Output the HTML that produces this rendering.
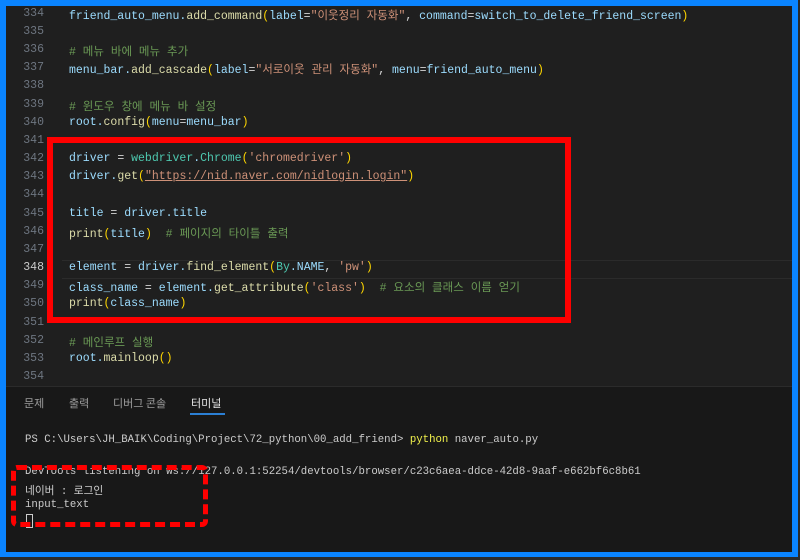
<!DOCTYPE html>
<html><head><meta charset="utf-8"><style>
body{margin:0;width:800px;height:560px;background:#2a2a2a;overflow:hidden;font-family:"Liberation Mono","Noto Sans CJK KR",monospace;}
.frame{position:absolute;left:0;top:0;width:786px;height:545px;border:6px solid #0a84ff;background:#1e1e1e;}
.ed{position:absolute;left:0;top:2px;width:786px;height:378px;}
.edbg{position:absolute;left:0;top:0;width:786px;height:380px;background:#1f1f1f;}
.ln{position:absolute;left:0;width:38px;text-align:right;color:#6e7681;font-size:11.5px;}
.ln.cur{color:#cccccc}
.code{position:absolute;left:63px;font-size:11.5px;color:#9cdcfe;white-space:pre;}
.f{color:#dcdcaa}.s{color:#ce9178}.c{color:#6a9955}.p{color:#ffd700}.k{color:#4ec9b0}.w{color:#d4d4d4}
.panel{position:absolute;left:0;top:380px;width:786px;height:165px;background:#181818;border-top:1px solid #2b2b2b;}
.tab{position:absolute;top:8px;font-size:11px;color:#9d9d9d;font-family:"Noto Sans CJK KR",sans-serif;}
.t{position:absolute;left:19px;font-size:10.7px;color:#cccccc;white-space:pre;}
</style></head><body>
<div class="frame">
<div class="edbg"></div>
<div class="ed">
<div class="ln" style="top:-1px">334</div><div class="code" style="top:-1px">friend_auto_menu.<span class="f">add_command</span><span class="p">(</span>label<span class="w">=</span><span class="s">"이웃정리 자동화"</span><span class="w">, </span>command<span class="w">=</span>switch_to_delete_friend_screen<span class="p">)</span></div>
<div class="ln" style="top:17px">335</div>
<div class="ln" style="top:35px">336</div><div class="code c" style="top:35px"># 메뉴 바에 메뉴 추가</div>
<div class="ln" style="top:53px">337</div><div class="code" style="top:53px">menu_bar.<span class="f">add_cascade</span><span class="p">(</span>label<span class="w">=</span><span class="s">"서로이웃 관리 자동화"</span><span class="w">, </span>menu<span class="w">=</span>friend_auto_menu<span class="p">)</span></div>
<div class="ln" style="top:71px">338</div>
<div class="ln" style="top:90px">339</div><div class="code c" style="top:90px"># 윈도우 창에 메뉴 바 설정</div>
<div class="ln" style="top:108px">340</div><div class="code" style="top:108px">root.<span class="f">config</span><span class="p">(</span>menu<span class="w">=</span>menu_bar<span class="p">)</span></div>
<div class="ln" style="top:126px">341</div>
<div class="ln" style="top:144px">342</div><div class="code" style="top:144px">driver <span class="w">=</span> <span class="k">webdriver</span>.<span class="k">Chrome</span><span class="p">(</span><span class="s">'chromedriver'</span><span class="p">)</span></div>
<div class="ln" style="top:162px">343</div><div class="code" style="top:162px">driver.<span class="f">get</span><span class="p">(</span><span class="s" style="text-decoration:underline">"https://nid.naver.com/nidlogin.login"</span><span class="p">)</span></div>
<div class="ln" style="top:180px">344</div>
<div class="ln" style="top:199px">345</div><div class="code" style="top:199px">title <span class="w">=</span> driver.title</div>
<div class="ln" style="top:217px">346</div><div class="code" style="top:217px"><span class="f">print</span><span class="p">(</span>title<span class="p">)</span>  <span class="c"># 페이지의 타이틀 출력</span></div>
<div class="ln" style="top:235px">347</div>
<div style="position:absolute;left:56px;top:252px;width:730px;height:17px;border-top:1px solid #2b2b2b;border-bottom:1px solid #2b2b2b"></div>
<div class="ln cur" style="top:253px">348</div><div class="code" style="top:253px">element <span class="w">=</span> driver.<span class="f">find_element</span><span class="p">(</span><span class="k">By</span>.NAME<span class="w">, </span><span class="s">'pw'</span><span class="p">)</span></div>
<div class="ln" style="top:271px">349</div><div class="code" style="top:271px">class_name <span class="w">=</span> element.<span class="f">get_attribute</span><span class="p">(</span><span class="s">'class'</span><span class="p">)</span>  <span class="c"># 요소의 클래스 이름 얻기</span></div>
<div class="ln" style="top:289px">350</div><div class="code" style="top:289px"><span class="f">print</span><span class="p">(</span>class_name<span class="p">)</span></div>
<div class="ln" style="top:308px">351</div>
<div class="ln" style="top:326px">352</div><div class="code c" style="top:326px"># 메인루프 실행</div>
<div class="ln" style="top:344px">353</div><div class="code" style="top:344px">root.<span class="f">mainloop</span><span class="p">()</span></div>
<div class="ln" style="top:362px">354</div>
</div>
<div class="panel">
<div class="tab" style="left:18px">문제</div>
<div class="tab" style="left:63px">출력</div>
<div class="tab" style="left:107px">디버그 콘솔</div>
<div class="tab" style="left:185px;color:#e7e7e7">터미널</div>
<div style="position:absolute;left:184px;top:26px;width:35px;height:2px;background:#2b7fd4"></div>
<div class="t" style="top:47px">PS C:\Users\JH_BAIK\Coding\Project\72_python\00_add_friend&gt; <span style="color:#f1f14c">python</span> naver_auto.py</div>
<div class="t" style="top:79px">DevTools listening on ws://127.0.0.1:52254/devtools/browser/c23c6aea-ddce-42d8-9aaf-e662bf6c8b61</div>
<div class="t" style="top:96px">네이버 : 로그인</div>
<div class="t" style="top:112px">input_text</div>
<div style="position:absolute;left:20px;top:127px;width:5px;height:12px;border:1px solid #ccc"></div>
</div>
</div>
<div style="position:absolute;left:47px;top:137px;width:512px;height:174px;border:6px solid #ff0000"></div>
<div style="position:absolute;left:11px;top:465px;width:187px;height:52px;border:5px dashed #ff0000;border-radius:6px"></div>
</body></html>
